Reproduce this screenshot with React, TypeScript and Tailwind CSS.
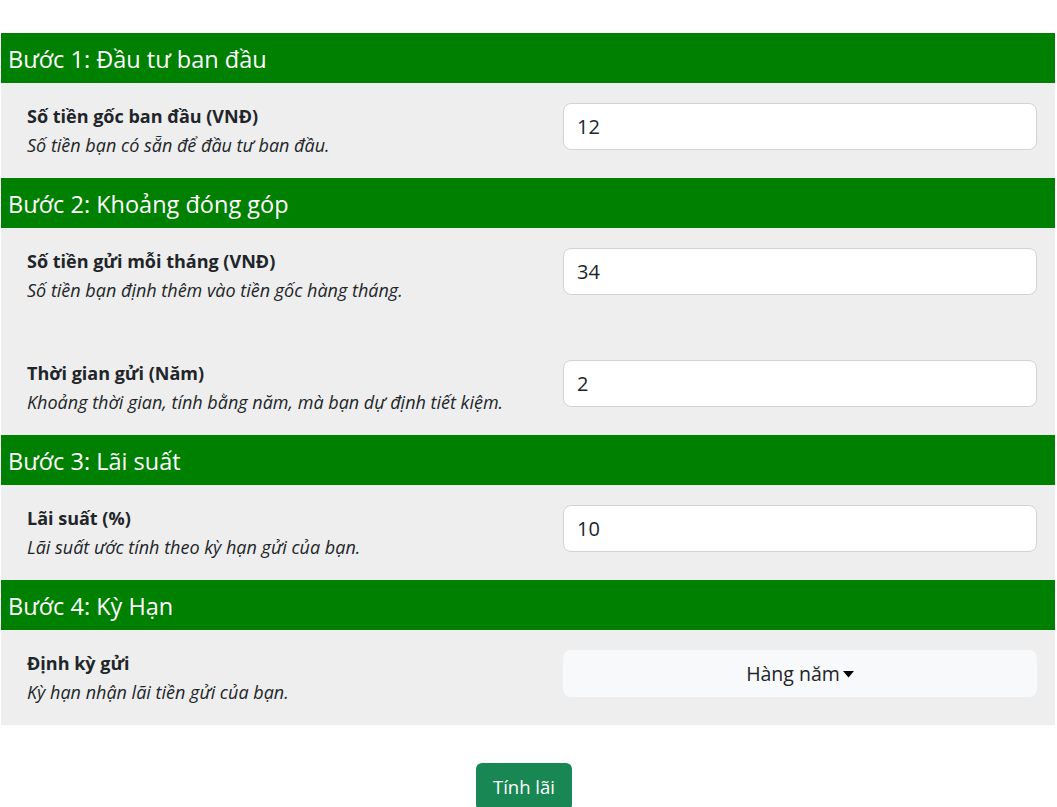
const font = { fontFamily: '"Open Sans", "Noto Sans", sans-serif' };

type Field = {
  label: string;
  hint: string;
  value?: string;
  select?: string;
};

const steps: { title: string; fields: Field[] }[] = [
  {
    title: 'Bước 1: Đầu tư ban đầu',
    fields: [{ label: 'Số tiền gốc ban đầu (VNĐ)', hint: 'Số tiền bạn có sẵn để đầu tư ban đầu.', value: '12' }],
  },
  {
    title: 'Bước 2: Khoảng đóng góp',
    fields: [
      { label: 'Số tiền gửi mỗi tháng (VNĐ)', hint: 'Số tiền bạn định thêm vào tiền gốc hàng tháng.', value: '34' },
      { label: 'Thời gian gửi (Năm)', hint: 'Khoảng thời gian, tính bằng năm, mà bạn dự định tiết kiệm.', value: '2' },
    ],
  },
  {
    title: 'Bước 3: Lãi suất',
    fields: [{ label: 'Lãi suất (%)', hint: 'Lãi suất ước tính theo kỳ hạn gửi của bạn.', value: '10' }],
  },
  {
    title: 'Bước 4: Kỳ Hạn',
    fields: [{ label: 'Định kỳ gửi', hint: 'Kỳ hạn nhận lãi tiền gửi của bạn.', select: 'Hàng năm' }],
  },
];

function Row({ field, first }: { field: Field; first: boolean }) {
  return (
    <div className={`flex items-start pl-[26px] pr-[18px] pb-[19px] ${first ? 'pt-5' : 'pt-[37px]'}`}>
      <div className="flex-1 text-[18px] leading-[27px] text-[#212529]">
        <div className="font-bold">{field.label}</div>
        <div className="mt-[2px] italic">{field.hint}</div>
      </div>
      <div className="w-[474px]">
        {field.select ? (
          <button className="flex h-[47px] w-full items-center justify-center gap-[3px] rounded-lg bg-[#f8f9fa] text-[19.5px] text-[#212529]">
            Hàng năm
            <svg width="11" height="7" viewBox="0 0 11 7" className="mt-[1px]">
              <path d="M0 0h11L5.5 6.5z" fill="#000" />
            </svg>
          </button>
        ) : (
          <input
            readOnly
            value={field.value}
            className="h-[47px] w-full rounded-lg border border-[#ced4da] bg-white px-[13px] text-[20px] text-[#212529] outline-none"
            style={font}
          />
        )}
      </div>
    </div>
  );
}

export default function App() {
  return (
    <main className="min-h-screen bg-white pt-[33px]" style={font}>
      <div className="ml-px w-[1054px]">
        {steps.map((step) => (
          <section key={step.title}>
            <h2 className="flex h-[50px] items-center bg-[#008000] pl-[7px] pt-1 text-[23.5px] text-white">{step.title}</h2>
            <div className="bg-[#eeeeee]">
              {step.fields.map((f, i) => (
                <Row key={f.label} field={f} first={i === 0} />
              ))}
            </div>
          </section>
        ))}
      </div>
      <div className="mt-[38px] flex justify-center pr-[9px]">
        <button className="h-12 rounded-md bg-[#198754] px-[17px] text-[18.5px] text-white">Tính lãi</button>
      </div>
    </main>
  );
}
